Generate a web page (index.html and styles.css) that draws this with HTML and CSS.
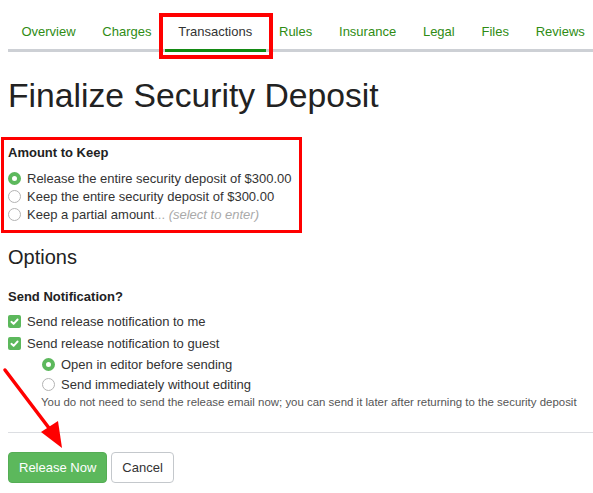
FILE: index.html
```html
<!DOCTYPE html>
<html>
<head>
<meta charset="utf-8">
<link rel="stylesheet" href="styles.css">
</head>
<body>
<div class="page">
  <nav class="tabs">
    <a class="tab">Overview</a>
    <a class="tab">Charges</a>
    <a class="tab active">Transactions</a>
    <a class="tab">Rules</a>
    <a class="tab">Insurance</a>
    <a class="tab">Legal</a>
    <a class="tab">Files</a>
    <a class="tab">Reviews</a>
  </nav>

  <h1 class="title">Finalize Security Deposit</h1>

  <section class="amount">
    <div class="label">Amount to Keep</div>
    <div class="choices">
      <div class="row"><span class="radio on"></span>Release the entire security deposit of $300.00</div>
      <div class="row"><span class="radio"></span>Keep the entire security deposit of $300.00</div>
      <div class="row"><span class="radio"></span>Keep a partial amount<span class="muted">... <i>(select to enter)</i></span></div>
    </div>
  </section>

  <h3 class="subtitle">Options</h3>

  <section class="notify">
    <div class="label">Send Notification?</div>
    <div class="checks">
      <div class="crow"><span class="check"><svg viewBox="0 0 13 13" width="13" height="13"><path d="M3.4 6.8 L5.6 8.9 L9.6 4.5" fill="none" stroke="#fff" stroke-width="1.9" stroke-linecap="round" stroke-linejoin="round"/></svg></span>Send release notification to me</div>
      <div class="crow"><span class="check"><svg viewBox="0 0 13 13" width="13" height="13"><path d="M3.4 6.8 L5.6 8.9 L9.6 4.5" fill="none" stroke="#fff" stroke-width="1.9" stroke-linecap="round" stroke-linejoin="round"/></svg></span>Send release notification to guest</div>
    </div>
    <div class="subchoices">
      <div class="srow"><span class="radio on"></span>Open in editor before sending</div>
      <div class="srow"><span class="radio"></span>Send immediately without editing</div>
    </div>
    <div class="help">You do not need to send the release email now; you can send it later after returning to the security deposit</div>
  </section>

  <hr class="divider">

  <div class="actions">
    <button class="btn primary">Release Now</button>
    <button class="btn">Cancel</button>
  </div>
</div>

<div class="mark mark-tab"></div>
<div class="mark mark-amount"></div>
<svg class="arrow" width="80" height="100" viewBox="0 0 80 100">
  <line x1="5" y1="10" x2="52" y2="72" stroke="#f00" stroke-width="3.5" stroke-linecap="round"/>
  <polygon points="62,88 41,72 58,61" fill="#f00"/>
</svg>
</body>
</html>
```

FILE: styles.css
```css
html, body {
  margin: 0;
  padding: 0;
  background: #fff;
}
body {
  font-family: "Liberation Sans", Arial, sans-serif;
  font-size: 13px;
  color: #333;
  position: relative;
  width: 593px;
  height: 493px;
  overflow: hidden;
}
.page {
  padding-left: 8px;
}
.tabs {
  display: flex;
  margin-top: 12px;
  border-bottom: 3px solid #cdd0d5;
}
.tab {
  display: block;
  padding: 11px 13.4px 8px;
  line-height: 18px;
  font-size: 13px;
  color: #2f8c14;
  white-space: nowrap;
}
.tab.active {
  color: #333;
  border-bottom: 3px solid #138a13;
  margin-bottom: -3px;
}
.title {
  margin: 23px 0 0;
  font-size: 33.7px;
  line-height: 40px;
  font-weight: normal;
  color: #222;
}
.amount {
  margin-top: 29px;
}
.label {
  font-weight: bold;
  line-height: 18px;
  color: #222;
}
.choices {
  margin-top: 7.5px;
}
.row {
  display: flex;
  align-items: center;
  line-height: 18px;
  height: 18px;
  font-size: 13px;
}
.radio {
  display: inline-block;
  box-sizing: border-box;
  width: 13px;
  height: 13px;
  border-radius: 50%;
  border: 1px solid #b3b3b3;
  background: #fff;
  margin-right: 6px;
  flex: none;
}
.radio.on {
  border: 4px solid #5cb85c;
}
.muted {
  color: #aaa;
  white-space: pre;
}
.subtitle {
  margin: 21.5px 0 0;
  font-size: 20px;
  line-height: 24px;
  font-weight: normal;
  color: #222;
}
.notify {
  margin-top: 19px;
}
.checks {
  margin-top: 4.5px;
}
.crow {
  display: flex;
  align-items: center;
  height: 22px;
  line-height: 22px;
}
.check {
  display: inline-block;
  width: 13px;
  height: 13px;
  border-radius: 2px;
  background: #5cb85c;
  margin-right: 6px;
  flex: none;
}
.check svg {
  display: block;
}
.subchoices {
  padding-left: 34px;
}
.srow {
  display: flex;
  align-items: center;
  height: 20px;
  line-height: 20px;
}
.srow .radio {
  margin-right: 6px;
}
.help {
  padding-left: 33px;
  font-size: 11.45px;
  line-height: 15px;
  color: #555;
  white-space: nowrap;
}
.divider {
  margin: 22.5px 0 0;
  border: 0;
  border-top: 1px solid #dcdee2;
  height: 0;
}
.actions {
  display: flex;
  gap: 4px;
  margin-top: 19px;
}
.btn {
  font-family: "Liberation Sans", Arial, sans-serif;
  font-size: 13px;
  line-height: 19px;
  padding: 5px 10px;
  border: 1px solid #c4c8cc;
  border-radius: 4px;
  background: #fff;
  color: #333;
}
.btn.primary {
  background: #5cb85c;
  border-color: #55ad55;
  color: #fff;
}
.mark {
  position: absolute;
  border: 3px solid #f00;
  box-sizing: border-box;
}
.mark-tab {
  left: 159px;
  top: 13px;
  width: 114px;
  height: 46px;
  border-width: 4px;
}
.mark-amount {
  left: 1px;
  top: 137px;
  width: 301px;
  height: 96px;
}
.arrow {
  position: absolute;
  left: 0;
  top: 360px;
}
```
